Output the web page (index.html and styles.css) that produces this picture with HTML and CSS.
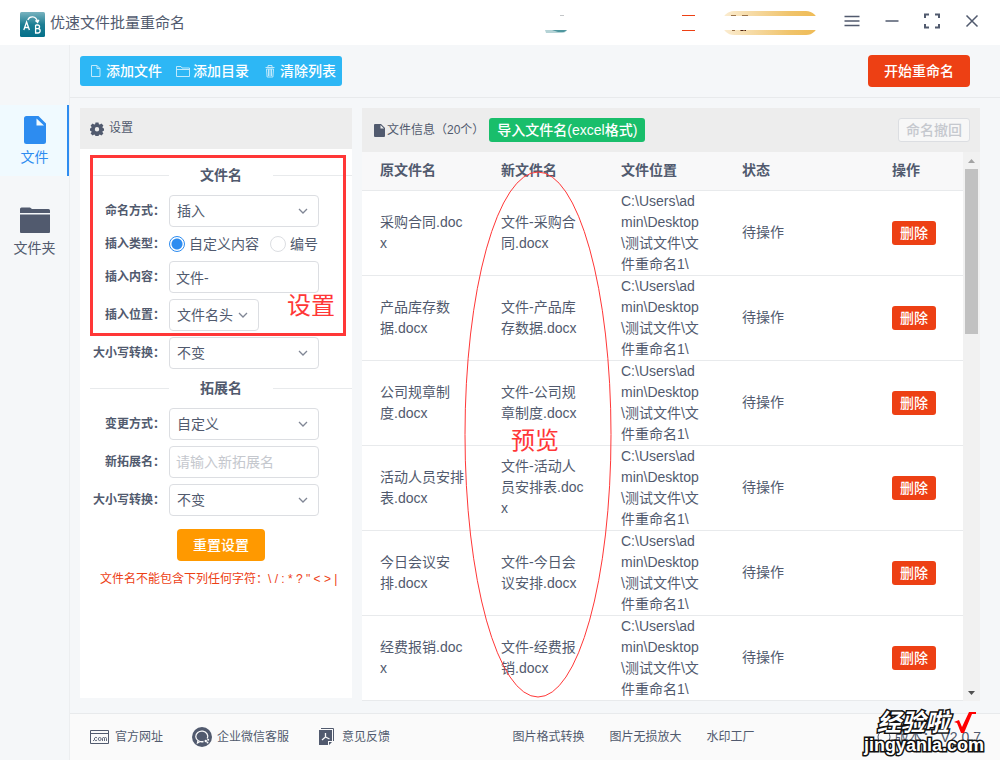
FILE: index.html
```html
<!DOCTYPE html>
<html lang="zh-CN">
<head>
<meta charset="utf-8">
<title>优速文件批量重命名</title>
<link rel="stylesheet" href="styles.css">
</head>
<body>
<header class="titlebar">
  <svg class="logo" viewBox="0 0 25 25" aria-hidden="true">
    <defs><linearGradient id="lg" x1="0" y1="0" x2="0" y2="1"><stop offset="0" stop-color="#79b3bf"/><stop offset=".5" stop-color="#1d7e94"/><stop offset="1" stop-color="#04708a"/></linearGradient></defs>
    <rect width="25" height="25" rx="1.5" fill="url(#lg)"/>
    <g fill="none" stroke="#fff" stroke-width="1.3">
      <path d="M3.8 18 6.6 10 9.4 18M4.8 15.5h3.6"/>
      <path d="M15.6 13v8h2.4a2.1 2.1 0 0 0 0-4.3h-2.4m0-3.7h2.1a1.8 1.8 0 0 1 0 3.7"/>
      <path d="M7.8 8C9.5 3.8 16 3.6 17.5 9.6M15.4 8.6l2.2 1.8 1.3-2.6"/>
    </g>
  </svg>
  <h1 class="app-name">优速文件批量重命名</h1>
  <svg class="account" viewBox="0 0 285 30" aria-hidden="true">
    <defs><linearGradient id="gold"><stop offset="0" stop-color="#fbedd3"/><stop offset=".7" stop-color="#f0c46c"/><stop offset="1" stop-color="#efbb55"/></linearGradient></defs>
    <path d="M5 23h22c-1 2-3 3-5 3H6z" fill="#b5d3d6"/>
    <path d="M12 23h15l-3 2h-6z" fill="#4f969e"/>
    <path d="M20 8.500h4" stroke="#c3c6c8"/>
    <path d="M142 8.500h13M142 23.500h13" stroke="#ed4014"/>
    <rect x="182" y="4" width="96" height="24" rx="12" fill="url(#gold)"/>
    <path d="M191 8.500h5m6 0h6M192 23.500h3m5 0h6" stroke="#9b7349"/>
    <rect x="2" y="9" width="282" height="14" fill="#fff"/>
    <path d="M201 23.500h2m2 0h1" stroke="#4c2216"/>
  </svg>
  <div class="window-buttons">
    <button type="button" aria-label="菜单"><svg viewBox="0 0 18 18"><path d="M1.500 4.500h15M1.500 9h15M1.500 13.500h15"/></svg></button>
    <button type="button" aria-label="最小化"><svg viewBox="0 0 18 18"><path d="M2.500 9h13"/></svg></button>
    <button type="button" aria-label="全屏"><svg viewBox="0 0 18 18"><path d="M2 6V2.500h4M12 2.500h4V6M16 12v3.500h-4M6 15.500H2V12" stroke-width="2"/></svg></button>
    <button type="button" aria-label="关闭"><svg viewBox="0 0 18 18"><path d="m3.500 3.500 11 11m0-11-11 11"/></svg></button>
  </div>
</header>

<div class="body">
  <nav class="sidebar">
    <a href="#file" class="side-item active">
      <svg width="22" height="28" viewBox="0 0 22 28"><path fill="currentColor" fill-rule="evenodd" d="M2.500 0H14.500l7.500 7.500v18a2.500 2.500 0 0 1-2.500 2.500h-17A2.500 2.500 0 0 1 0 25.500v-23A2.500 2.500 0 0 1 2.500 0zm10 2.500v7H20z"/></svg>
      <span>文件</span>
    </a>
    <a href="#folder" class="side-item">
      <svg width="30" height="28" viewBox="0 0 30 28"><path fill="currentColor" d="M0 6V2a1.500 1.500 0 0 1 1.500-1.500H10l2 1.500h16.500A1.500 1.500 0 0 1 30 3.500V6zM0 7.500h30V25a1 1 0 0 1-1 1H1a1 1 0 0 1-1-1z"/></svg>
      <span>文件夹</span>
    </a>
  </nav>

  <div class="content">
    <div class="toolbar">
      <div class="tool-group">
        <button type="button"><svg viewBox="0 0 14 14"><path d="M2.500 1.500h5.500l3 3v8H2.500zM8 1.500v3h3"/></svg>添加文件</button>
        <button type="button"><svg viewBox="0 0 14 14"><path d="M.5 12.500v-10h4.500l1 1.500h7.500v8.500zM.5 5.500h13"/></svg>添加目录</button>
        <button type="button"><svg viewBox="0 0 14 14"><path d="M2.500 3.500h9M5 3V1.500h4V3M3.500 5l.6 8h5.800l.6-8zM5.500 5v7M7 5v7M8.500 5v7"/></svg>清除列表</button>
      </div>
      <button type="button" class="btn start">开始重命名</button>
    </div>

    <main class="panels">
      <section class="settings">
        <h2 class="settings-head">
          <svg width="14" height="14" viewBox="0 0 14 14"><path fill="currentColor" fill-rule="evenodd" d="M5.500.5h3l.4 1.700 1 .4 1.500-1 2 2-1 1.500.4 1 1.700.4v2l-1.700.5-.4 1 1 1.500-2 2-1.500-1-1 .4-.4 1.600h-3l-.4-1.600-1-.4-1.500 1-2-2 1-1.500-.4-1L-.5 8.500v-2l1.700-.4.4-1-1-1.500 2-2 1.500 1 1-.4zM7 5a2.200 2.200 0 1 0 0 4.400A2.200 2.200 0 0 0 7 5z"/></svg>
          设置
        </h2>
        <form class="form">
          <h3 class="divider">文件名</h3>
          <div class="rows">
            <div class="row"><label for="mode">命名方式：</label>
              <div class="select"><select id="mode"><option>插入</option></select><svg viewBox="0 0 10 6"><path d="m1 1 4 4 4-4"/></svg></div></div>
            <div class="row radios" role="radiogroup" aria-labelledby="kind"><span class="label" id="kind">插入类型：</span>
              <label class="radio"><input type="radio" name="kind" checked>自定义内容</label>
              <label class="radio"><input type="radio" name="kind">编号</label></div>
            <div class="row"><label for="text">插入内容：</label><input class="input" id="text" type="text" value="文件-"></div>
            <div class="row"><label for="pos">插入位置：</label>
              <div class="select short"><select id="pos"><option>文件名头</option></select><svg viewBox="0 0 10 6"><path d="m1 1 4 4 4-4"/></svg></div></div>
            <div class="row"><label for="case1">大小写转换：</label>
              <div class="select"><select id="case1"><option>不变</option></select><svg viewBox="0 0 10 6"><path d="m1 1 4 4 4-4"/></svg></div></div>
          </div>
          <h3 class="divider">拓展名</h3>
          <div class="rows">
            <div class="row"><label for="extmode">变更方式：</label>
              <div class="select"><select id="extmode"><option>自定义</option></select><svg viewBox="0 0 10 6"><path d="m1 1 4 4 4-4"/></svg></div></div>
            <div class="row"><label for="ext">新拓展名：</label><input class="input" id="ext" type="text" placeholder="请输入新拓展名"></div>
            <div class="row"><label for="case2">大小写转换：</label>
              <div class="select"><select id="case2"><option>不变</option></select><svg viewBox="0 0 10 6"><path d="m1 1 4 4 4-4"/></svg></div></div>
          </div>
          <button type="reset" class="btn reset">重置设置</button>
          <p class="warning">文件名不能包含下列任何字符：\ / : * ? " &lt; &gt; |</p>
        </form>
        <div class="mark-box"></div>
        <div class="mark-text mark-settings">设置</div>
      </section>

      <section class="files">
        <div class="files-head">
          <svg width="11" height="13" viewBox="0 0 11 13"><path fill="currentColor" fill-rule="evenodd" d="M1 0h6l4 4v8a1 1 0 0 1-1 1H1a1 1 0 0 1-1-1V1a1 1 0 0 1 1-1zm5.500 1v3.500H10z"/></svg>
          <h2>文件信息（20个）</h2>
          <button type="button" class="btn small import">导入文件名(excel格式)</button>
          <button type="button" class="btn small undo" disabled>命名撤回</button>
        </div>
        <div class="files-body">
          <table>
            <thead><tr><th class="c1">原文件名</th><th class="c2">新文件名</th><th class="c3">文件位置</th><th class="c4">状态</th><th>操作</th></tr></thead>
            <tbody>
              <tr><td>采购合同.docx</td><td>文件-采购合同.docx</td><td>C:\Users\admin\Desktop\测试文件\文件重命名1\</td><td>待操作</td><td><button type="button" class="btn small delete">删除</button></td></tr>
              <tr><td>产品库存数据.docx</td><td>文件-产品库存数据.docx</td><td>C:\Users\admin\Desktop\测试文件\文件重命名1\</td><td>待操作</td><td><button type="button" class="btn small delete">删除</button></td></tr>
              <tr><td>公司规章制度.docx</td><td>文件-公司规章制度.docx</td><td>C:\Users\admin\Desktop\测试文件\文件重命名1\</td><td>待操作</td><td><button type="button" class="btn small delete">删除</button></td></tr>
              <tr><td>活动人员安排表.docx</td><td>文件-活动人员安排表.docx</td><td>C:\Users\admin\Desktop\测试文件\文件重命名1\</td><td>待操作</td><td><button type="button" class="btn small delete">删除</button></td></tr>
              <tr><td>今日会议安排.docx</td><td>文件-今日会议安排.docx</td><td>C:\Users\admin\Desktop\测试文件\文件重命名1\</td><td>待操作</td><td><button type="button" class="btn small delete">删除</button></td></tr>
              <tr><td>经费报销.docx</td><td>文件-经费报销.docx</td><td>C:\Users\admin\Desktop\测试文件\文件重命名1\</td><td>待操作</td><td><button type="button" class="btn small delete">删除</button></td></tr>
            </tbody>
          </table>
          <div class="scrollbar" aria-hidden="true">
            <svg viewBox="0 0 17 17"><path d="M5 11h7L8.500 7z" fill="#a3a3a3"/></svg>
            <div class="thumb"></div>
            <svg class="down" viewBox="0 0 17 17"><path d="M5 7h7l-3.500 4z" fill="#505050"/></svg>
          </div>
        </div>
        <svg class="mark-ellipse" viewBox="0 0 148 527" aria-hidden="true"><ellipse cx="74" cy="263.500" rx="73" ry="262.500"/></svg>
        <div class="mark-text mark-preview">预览</div>
      </section>
    </main>

    <footer class="footer">
      <a href="#site"><svg width="20" height="16" viewBox="0 0 20 16" fill="none" stroke="currentColor"><path d="M.5 1.500h18v13H.5zM.5 4.500h18"/><path d="M7 8.800a1.600 1.600 0 1 0 0 2.400M12.500 12V9.500a1 1 0 0 1 2 0V12m0-2.500a1 1 0 0 1 2 0V12M3 11.500h1" stroke-width=".9"/><circle cx="9.700" cy="10" r="1.500" stroke-width=".9"/></svg>官方网址</a>
      <a href="#wechat"><svg width="20" height="20" viewBox="0 0 20 20"><circle cx="10" cy="10" r="10" fill="currentColor"/><path d="M15.300 11.500A6 5.300 0 1 0 11.500 14.500M6 13.500l-.5 2.500 2.500-1.500" fill="none" stroke="#fafafa" stroke-width="1.300"/><circle cx="13.800" cy="14" r="1.200" fill="#fafafa"/><circle cx="16.200" cy="12.800" r="1" fill="#fafafa"/><circle cx="15.500" cy="15.500" r="1" fill="#fafafa"/></svg>企业微信客服</a>
      <a href="#feedback" class="feedback"><svg width="17" height="18" viewBox="0 0 17 18"><path d="M3 .5h12.500V13" fill="none" stroke="currentColor"/><path d="M1 2h13v11h-4v4H1zM11 14h3l-3 3z" fill="currentColor"/><path d="M7.500 5v4L4 12M7.500 9l4 2" fill="none" stroke="#fafafa" stroke-width="1.300"/></svg>意见反馈</a>
      <div class="more">
        <a href="#convert">图片格式转换</a>
        <a href="#enlarge">图片无损放大</a>
        <a href="#watermark">水印工厂</a>
      </div>
      <div class="version">
        <svg width="14" height="14" viewBox="0 0 14 14" fill="none" stroke="currentColor"><circle cx="7" cy="7" r="6"/></svg>
        <span>版本：</span><span class="number">V2.0.7</span>
        <div class="stamp">
          <div class="stamp-top">经验啦<svg width="24" height="24" viewBox="0 0 24 24"><path d="M1 11 6 9l3 7L16 1h7v2h-4l-8 19H8L4 12z" fill="#f00"/></svg></div>
          <div class="stamp-url">jingyanla.com</div>
        </div>
      </div>
    </footer>
  </div>
</div>
</body>
</html>
```
FILE: styles.css
```css
* { box-sizing: border-box; }

body {
  margin: 0;
  min-height: 100vh;
  display: flex;
  flex-direction: column;
  background: #f5f7f9;
  color: #515a6e;
  font: 14px/21px "Liberation Sans", "Noto Sans CJK SC", sans-serif;
}

h1, h2, h3, p { margin: 0; font-size: inherit; font-weight: 400; }
a { color: inherit; text-decoration: none; }
button, input, select { font: inherit; color: inherit; margin: 0; }
button { cursor: pointer; }

/* Title bar */
.titlebar {
  height: 45px;
  display: flex;
  align-items: center;
  padding: 0 8px 0 20px;
  background: #fff;
}
.logo { width: 25px; height: 25px; margin: 4px 5px 0 0; }
.app-name { font-size: 15px; }
.account { width: 285px; height: 30px; margin: 0 7px 1px auto; }
.window-buttons { display: flex; }
.window-buttons button {
  width: 40px;
  height: 42px;
  padding: 0;
  margin-bottom: 3px;
  border: 0;
  background: none;
  display: grid;
  place-items: center;
}
.window-buttons svg { width: 18px; height: 18px; fill: none; stroke: #515a6e; stroke-width: 1.5; }

/* Sidebar */
.body { flex: 1; display: flex; }
.sidebar {
  width: 70px;
  flex: none;
  border-right: 1px solid #eceef0;
  padding-top: 60px;
  display: flex;
  flex-direction: column;
  gap: 20px;
}
.side-item {
  height: 71px;
  display: flex;
  flex-direction: column;
  align-items: center;
  gap: 3px;
  padding: 11px 0 0 2px;
  border-right: 2px solid transparent;
}
.side-item.active { background: #f0faff; color: #2d8cf0; border-color: #2d8cf0; }

.content { flex: 1; min-width: 0; display: flex; flex-direction: column; }

/* Toolbar */
.toolbar {
  height: 53px;
  display: flex;
  align-items: center;
  justify-content: space-between;
  padding: 0 30px 0 10px;
  border-bottom: 1px solid #e8eaec;
}
.tool-group { display: flex; background: #2db7f5; border-radius: 3px; padding-right: 1px; }
.tool-group button {
  height: 30px;
  display: flex;
  align-items: center;
  gap: 3px;
  padding: 0 5px 0 9px;
  border: 0;
  background: none;
  color: #fff;
  font-weight: 500;
}
.tool-group svg { width: 14px; height: 14px; fill: none; stroke: #fff; opacity: .7; }

.btn {
  height: 32px;
  padding: 0 15px;
  border: 1px solid transparent;
  border-radius: 4px;
  color: #fff;
  font-weight: 500;
  line-height: 20px;
}
.btn.small { height: 24px; padding: 0 7px; border-radius: 3px; }
.start, .delete { background: #ed4014; }
.import { background: #19be6b; }
.reset { background: #f90; }
.undo { background: #f7f7f7; border-color: #dcdee2; color: #c5c8ce; }

.panels { flex: 1; display: flex; gap: 10px; padding: 10px 20px 12px 10px; }

/* Settings panel */
.settings { position: relative; width: 272px; flex: none; margin-bottom: 3px; background: #fff; }
.settings-head {
  height: 41px;
  display: flex;
  align-items: center;
  gap: 5px;
  padding: 0 10px;
  background: #ededed;
  font-size: 12px;
}
.form { display: flex; flex-direction: column; padding: 16px 0 0 10px; }
.divider {
  display: grid;
  grid-template-columns: 79px 1fr 79px;
  align-items: center;
  height: 20px;
  text-align: center;
  font-weight: 700;
}
.divider::before, .divider::after { content: ""; height: 1px; background: #e8eaec; }
.rows { display: flex; flex-direction: column; gap: 6px; padding: 10px 0 9px; }
.row { display: flex; align-items: center; gap: 4px; }
.row > label:first-child, .label {
  width: 75px;
  font-size: 12px;
  font-weight: 700;
  text-align: right;
  white-space: nowrap;
}
.radios { height: 22px; }
.radio { display: flex; align-items: center; gap: 4px; margin-right: 7px; }
.radio input {
  appearance: none;
  width: 16px;
  height: 16px;
  border: 1px solid #dcdee2;
  border-radius: 50%;
  background: #fff;
}
.radio input:checked { border-color: #2d8cf0; background: radial-gradient(#2d8cf0 5px, #fff 6px); }
.select { position: relative; width: 150px; }
.select.short { width: 90px; }
.select svg {
  position: absolute;
  right: 11px;
  top: 13px;
  width: 10px;
  height: 6px;
  fill: none;
  stroke: #808695;
  stroke-width: 1.3;
  pointer-events: none;
}
.select select, .input {
  width: 100%;
  height: 32px;
  padding: 0 7px;
  border: 1px solid #dcdee2;
  border-radius: 4px;
  background: #fff;
  appearance: none;
}
.input { width: 150px; padding: 0 6px; }
.input::placeholder { color: #c5c8ce; }
.reset { align-self: center; margin-top: 4px; }
.warning { margin: 8px 0 0 10px; color: #ed4014; font-size: 12px; }

/* File list */
.files { position: relative; flex: 1; min-width: 0; }
.files-head {
  height: 44px;
  display: flex;
  align-items: center;
  padding: 0 10px 0 12px;
  background: #ededed;
}
.files-head h2 { margin: 0 5px 0 2px; font-size: 12px; }
.undo { margin-left: auto; }
.files-body { display: flex; background: #fff; }
table { flex: 1; border-collapse: collapse; table-layout: fixed; }
th, td {
  padding: 0 18px;
  border-bottom: 1px solid #e8eaec;
  text-align: left;
  vertical-align: middle;
  word-break: break-all;
}
th { height: 38px; background: #f8f8f9; font-weight: 700; }
td { height: 85px; }
.c1, .c3 { width: 121px; }
.c2 { width: 120px; }
.c4 { width: 150px; }
.scrollbar { width: 17px; flex: none; display: flex; flex-direction: column; background: #f1f1f1; }
.scrollbar svg { width: 17px; height: 17px; }
.scrollbar .down { margin-top: auto; }
.thumb { height: 30%; margin: 0 2px; background: #c1c1c1; }

/* Annotations drawn over the panels */
.mark-box {
  position: absolute;
  left: 10px;
  top: 47px;
  width: 256px;
  height: 181px;
  border: 3px solid #ff3737;
  pointer-events: none;
}
.mark-text { position: absolute; color: #ff3737; font-size: 24px; line-height: 32px; }
.mark-settings { left: 207px; top: 182px; }
.mark-preview { left: 149px; top: 317px; }
.mark-ellipse {
  position: absolute;
  left: 102px;
  top: 63px;
  width: 148px;
  height: 527px;
  fill: none;
  stroke: #ff3737;
  pointer-events: none;
}

/* Footer */
.footer {
  height: 47px;
  display: flex;
  align-items: center;
  padding: 0 19px 0 20px;
  border-top: 1px solid #e8eaec;
  background: #fafafa;
  font-size: 12px;
}
.footer > a { display: flex; align-items: center; gap: 5px; margin-right: 29px; }
.footer > .feedback { gap: 7px; }
.more { display: flex; gap: 25px; margin-left: auto; }
.version { position: relative; display: flex; align-items: center; gap: 4px; margin-left: 122px; font-size: 14px; }
.stamp {
  position: absolute;
  right: -3px;
  bottom: -7px;
  color: #fff;
  font-weight: 700;
  -webkit-text-stroke: 3px #111;
  paint-order: stroke fill;
  pointer-events: none;
}
.stamp-top {
  display: flex;
  align-items: center;
  gap: 4px;
  padding-left: 13px;
  font-size: 24px;
  font-style: italic;
  line-height: 24px;
}
.stamp-url { font-size: 18px; line-height: 20px; }
```
